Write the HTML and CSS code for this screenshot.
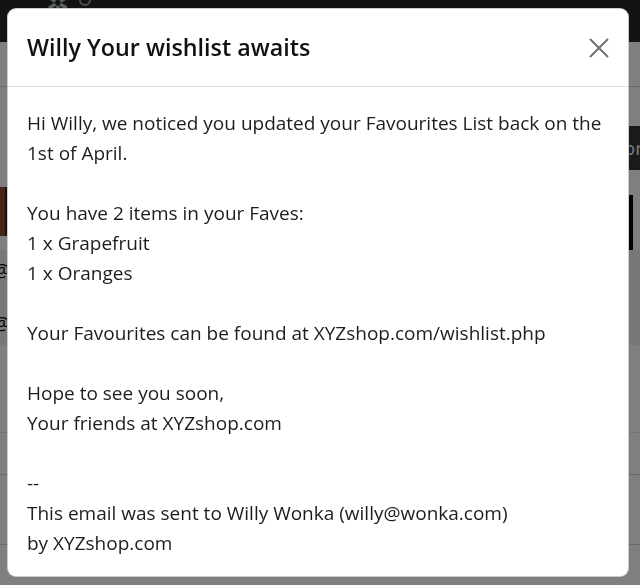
FILE: index.html
```html
<!DOCTYPE html>
<html lang="en">
<head>
<meta charset="utf-8">
<title>Willy Your wishlist awaits</title>
<link rel="stylesheet" href="styles.css">
</head>
<body>
<div class="page">
  <header class="navbar">
    <span class="logo">✲</span><span class="logo-arc"></span>
  </header>
  <div class="row row-a"></div>
  <div class="row row-b"></div>
  <div class="row row-c"><span class="tab-right">or</span></div>
  <div class="row row-d"><span class="box-left"></span><span class="bar-right"></span></div>
  <div class="row row-e"><span class="at">@</span></div>
  <div class="row row-f"><span class="at">@</span></div>
  <div class="row row-g"></div>
  <div class="row row-h"></div>
  <div class="row row-i"></div>
</div>

<div class="backdrop"></div>

<div class="modal">
  <div class="modal-dialog">
    <div class="modal-content">
      <div class="modal-header">
        <h5 class="modal-title">Willy Your wishlist awaits</h5>
        <button class="btn-close" aria-label="Close">
          <svg viewBox="0 0 20 20" width="20" height="20"><path d="M1 1 L19 19 M19 1 L1 19" stroke="currentColor" stroke-width="1.9" fill="none"/></svg>
        </button>
      </div>
      <div class="modal-body">
        <p>Hi Willy, we noticed you updated your Favourites List back on the<br>1st of April.</p>
        <p>You have 2 items in your Faves:<br>1 x Grapefruit<br>1 x Oranges</p>
        <p>Your Favourites can be found at XYZshop.com/wishlist.php</p>
        <p>Hope to see you soon,<br>Your friends at XYZshop.com</p>
        <p>--<br>This email was sent to Willy Wonka (willy@wonka.com)<br>by XYZshop.com</p>
      </div>
    </div>
  </div>
</div>
</body>
</html>
```
FILE: styles.css
```css
* { box-sizing: border-box; }
html, body { margin: 0; padding: 0; }
body {
  width: 640px;
  height: 585px;
  overflow: hidden;
  background: #ffffff;
  font-family: "Open Sans", "Noto Sans", sans-serif;
  color: #212529;
}

.page { display: flex; flex-direction: column; }
.navbar {
  height: 42px;
  flex: none;
  background: #262626;
  padding-left: 46px;
  color: #bdbdbd;
  font-size: 28px;
  line-height: 20px;
  display: flex;
  align-items: flex-start;
  gap: 10px;
}
.logo { display: inline-block; transform: translateY(-8px); }
.logo-arc {
  width: 12px; height: 12px; margin-top: -6px;
  border: 2px solid #9a9a9a; border-radius: 50%;
}
.row { display: flex; justify-content: space-between; align-items: flex-start; flex: none; }
.row-a { height: 45px; border-bottom: 1px solid #d4d4d4; }
.row-b { height: 39px; }
.row-c { height: 44px; justify-content: flex-end; }
.tab-right {
  width: 40px; height: 44px;
  background: #343434; color: #f4f4f4; font-size: 19px; line-height: 44px;
  text-align: right; padding-right: 0; margin-right: -3px;
}
.row-d { height: 80px; }
.box-left { width: 30px; height: 49px; margin-top: 17px; background: #2a2a2a; border-left: 5px solid #8a4a2c; }
.bar-right { width: 4px; height: 70px; margin-top: 25px; margin-right: 7px; background: #000; }
.row-e { height: 47px; background: #f0f0f0; padding-top: 5px; }
.row-f { height: 48px; background: #f0f0f0; padding-top: 11px; }
.at { font-size: 19px; line-height: 30px; color: #000; margin-left: -7px; }
.row-g { height: 88px; border-bottom: 1px solid #e6e6e6; }
.row-h { height: 42px; border-bottom: 1px solid #d0d0d0; }
.row-i { height: 70px; border-bottom: 1px solid #d0d0d0; }

.backdrop {
  position: fixed; inset: 0;
  background: rgba(0, 0, 0, 0.5);
}

.modal {
  position: fixed; inset: 0;
}
.modal-dialog {
  padding: 8px 11px 8px 7px;
}
.modal-content {
  background: #fff;
  border-radius: 9px;
  border: 1px solid rgba(0,0,0,0.2);
  overflow: hidden;
}
.modal-header {
  display: flex;
  align-items: center;
  justify-content: space-between;
  padding: 20px 19px 20px 19px;
  border-bottom: 1px solid #dee2e6;
}
.modal-title {
  margin: 0;
  font-size: 23.3px;
  line-height: 37px;
  font-weight: 600;
  color: #111;
}
.btn-close {
  border: 0; background: transparent; padding: 0;
  width: 20px; height: 20px;
  color: #6e6e6e;
  display: flex;
}
.modal-body {
  padding: 21px 19px 18px 19px;
  font-size: 19px;
  line-height: 30px;
  color: #1d1d1d;
}
.modal-body p { margin: 0 0 30px 0; }
.modal-body p:last-child { margin-bottom: 0; }
```
